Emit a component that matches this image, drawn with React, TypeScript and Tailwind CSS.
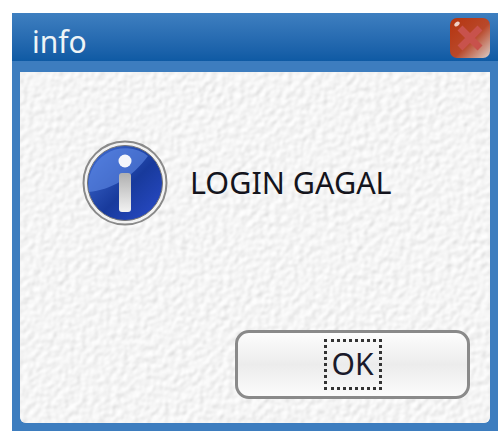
export default function App() {
  return (
    <div className="w-[500px] h-[431px] bg-white pt-[13px] pl-[12px] overflow-hidden font-['Noto_Sans','Open_Sans',sans-serif]">
      <div className="w-[486px] h-[418px] bg-[#3d7dbf] flex flex-col">
        {/* Title bar */}
        <div className="h-[48px] shrink-0 flex items-center justify-between pl-[20px] pr-[7px] bg-gradient-to-b from-[#3e7fc0] to-[#0e5aa4]">
          <span className="text-[30px] leading-none text-[#eef4f6] pt-[10px]">info</span>
          <svg width="42" height="42" viewBox="0 0 42 42" className="mt-[1px]">
            <defs>
              <linearGradient id="closeFill" x1="0" y1="0" x2="1" y2="1">
                <stop offset="0" stopColor="#b5340e" />
                <stop offset="0.55" stopColor="#b9482a" />
                <stop offset="1" stopColor="#d9cdc8" />
              </linearGradient>
            </defs>
            <rect x="1" y="1" width="40" height="40" rx="7" fill="url(#closeFill)" />
            <path d="M11 11 L31 31 M31 11 L11 31" stroke="#c8524c" strokeWidth="7" />
            <ellipse cx="8" cy="7" rx="3" ry="2" fill="#f0cfc4" transform="rotate(-40 8 7)" />
          </svg>
        </div>
        <div className="h-[11px] shrink-0" />
        {/* Dialog body */}
        <div className="relative ml-[8px] mr-[8px] h-[351px] rounded-bl-[6px] rounded-br-[6px] overflow-hidden bg-[#f1f1f1]">
          <svg className="absolute inset-0 w-full h-full">
            <filter id="emboss" x="0" y="0" width="100%" height="100%">
              <feTurbulence type="fractalNoise" baseFrequency="0.17" numOctaves="3" seed="7" result="noise" />
              <feDiffuseLighting in="noise" lightingColor="#ffffff" surfaceScale="1.1" diffuseConstant="1.04">
                <feDistantLight azimuth="225" elevation="62" />
              </feDiffuseLighting>
              <feGaussianBlur stdDeviation="0.9" />
            </filter>
            <rect width="100%" height="100%" filter="url(#emboss)" />
          </svg>
          <div className="relative flex flex-col h-full">
            <div className="flex items-center pl-[62px] pt-[68px] gap-[22px]">
              <svg width="86" height="86" viewBox="0 0 86 86">
                <defs>
                  <linearGradient id="infoBall" x1="0" y1="0" x2="1" y2="1">
                    <stop offset="0" stopColor="#4472d8" />
                    <stop offset="0.55" stopColor="#183a9c" />
                    <stop offset="1" stopColor="#2a4ccc" />
                  </linearGradient>
                  <linearGradient id="infoStem" x1="0" y1="0" x2="0" y2="1">
                    <stop offset="0" stopColor="#b0b0b0" />
                    <stop offset="1" stopColor="#f2f2f2" />
                  </linearGradient>
                </defs>
                <circle cx="43" cy="43" r="41.5" fill="#f2f2f2" stroke="#8a8a8a" strokeWidth="2" />
                <circle cx="43" cy="43" r="37.5" fill="url(#infoBall)" stroke="#777777" strokeWidth="1" />
                <path d="M7 52 C28 50 50 38 66 16 A37 37 0 0 0 7 52 Z" fill="#5f8be6" opacity="0.6" />
                <circle cx="43" cy="21" r="6.5" fill="#f4f6fb" />
                <rect x="37" y="33" width="12" height="39" rx="3" fill="url(#infoStem)" />
              </svg>
              <span className="text-[30.5px] leading-none text-[#14141c] pb-[2px]">LOGIN GAGAL</span>
            </div>
            <div className="mt-auto mb-[24px] mr-[20px] self-end">
              <button className="w-[235px] h-[69px] rounded-[14px] border-[3px] border-[#8a8a8a] bg-gradient-to-b from-[#fdfdfd] via-[#ececec] to-[#fbfbfb] flex items-center justify-center">
                <span className="block w-[58px] h-[51px] border-[3px] border-dotted border-[#333333] text-[30px] leading-[43px] text-center text-[#1a1a2a]">OK</span>
              </button>
            </div>
          </div>
        </div>
      </div>
    </div>
  );
}
